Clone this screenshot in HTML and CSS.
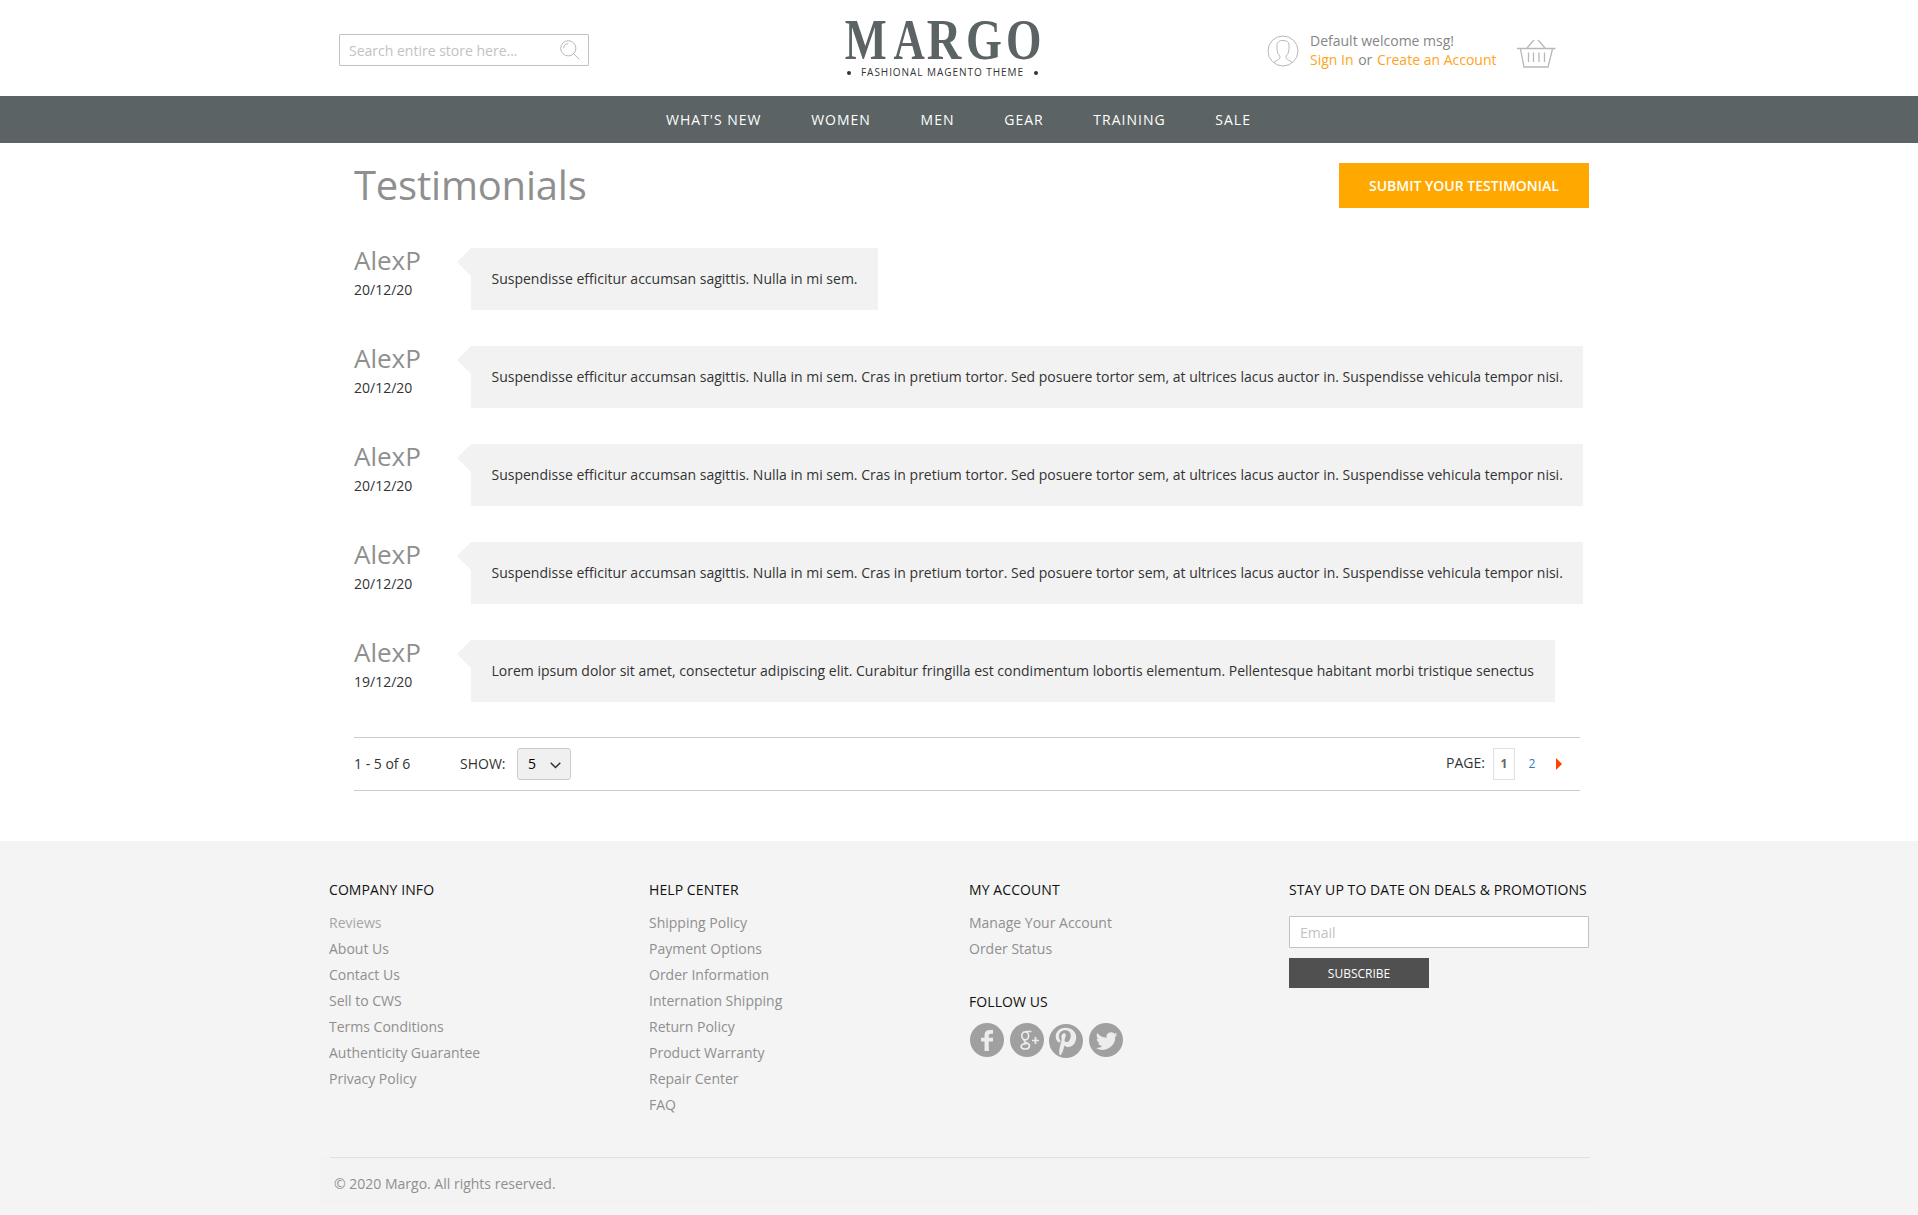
FILE: index.html
```html
<!DOCTYPE html>
<html lang="en">
<head>
<meta charset="utf-8">
<title>Testimonials</title>
<link rel="stylesheet" href="styles.css">
</head>
<body>
<header class="header">
  <form class="search">
    <input class="search-input" type="text" placeholder="Search entire store here...">
    <svg class="search-icon" width="20" height="20" viewBox="0 0 20 20"><circle cx="8.3" cy="8.3" r="7.6"/><path d="M13.7 13.7 19.3 19.3M3.6 8.2a4.7 4.7 0 0 1 4.6-4.6"/></svg>
  </form>
  <a class="logo">
    <svg width="200" height="90" viewBox="0 -16 200 90">
      <g class="logo-word">
        <text transform="translate(3.8 43) scale(.78 1)">M</text>
        <text transform="translate(52.5 43) scale(.76 1)">A</text>
        <text transform="translate(85.8 43) scale(.84 1)">R</text>
        <text transform="translate(125 43) scale(.81 1)">G</text>
        <text transform="translate(165.100 43) scale(.8 1)">O</text>
      </g>
      <circle cx="8" cy="57" r="2"/><circle cx="195" cy="57" r="2"/>
      <text class="logo-tag" x="20" y="60" textLength="162">FASHIONAL MAGENTO THEME</text>
    </svg>
  </a>
  <div class="account">
    <svg class="user-icon" width="32" height="32" viewBox="0 0 32 32"><circle cx="16" cy="16" r="15"/><path d="M6.5 27.5c1.500-1.600 4.700-2 6-3.800 .6-1 .4-2 .4-2.700-2-1.700-2.700-4-2.900-7.500V9.700C10.200 6.700 12.400 5.500 16 5.500s5.800 1.200 6 4.200v3.800c-.2 3.500-.9 5.800-2.900 7.500 0 .7-.2 1.700.4 2.700 1.300 1.800 4.500 2.200 6 3.800"/></svg>
    <div class="welcome"><div>Default welcome msg!</div><div><a>Sign In</a> <span class="or">or</span> <a>Create an Account</a></div></div>
    <svg class="cart-icon" width="40" height="30" viewBox="0 0 40 30"><path d="M1 9.500h38.500M4.500 10 8 28h24l4.500-18M11 9 18 1M22 1l7 8M12.500 13.500v9.500M17.500 13.500v9.500M23 13.500v9.500M28.500 13.500v9.500"/></svg>
  </div>
</header>
<nav class="nav"><a>WHAT'S NEW</a><a>WOMEN</a><a>MEN</a><a>GEAR</a><a>TRAINING</a><a>SALE</a></nav>
<main class="main">
  <div class="title-row"><h1 class="title">Testimonials</h1><button class="submit">SUBMIT YOUR TESTIMONIAL</button></div>
  <div class="list">
    <article class="item"><div class="who"><h2>AlexP</h2><time>20/12/20</time></div><p class="bubble">Suspendisse efficitur accumsan sagittis. Nulla in mi sem.</p></article>
    <article class="item"><div class="who"><h2>AlexP</h2><time>20/12/20</time></div><p class="bubble">Suspendisse efficitur accumsan sagittis. Nulla in mi sem. Cras in pretium tortor. Sed posuere tortor sem, at ultrices lacus auctor in. Suspendisse vehicula tempor nisi.</p></article>
    <article class="item"><div class="who"><h2>AlexP</h2><time>20/12/20</time></div><p class="bubble">Suspendisse efficitur accumsan sagittis. Nulla in mi sem. Cras in pretium tortor. Sed posuere tortor sem, at ultrices lacus auctor in. Suspendisse vehicula tempor nisi.</p></article>
    <article class="item"><div class="who"><h2>AlexP</h2><time>20/12/20</time></div><p class="bubble">Suspendisse efficitur accumsan sagittis. Nulla in mi sem. Cras in pretium tortor. Sed posuere tortor sem, at ultrices lacus auctor in. Suspendisse vehicula tempor nisi.</p></article>
    <article class="item"><div class="who"><h2>AlexP</h2><time>19/12/20</time></div><p class="bubble">Lorem ipsum dolor sit amet, consectetur adipiscing elit. Curabitur fringilla est condimentum lobortis elementum. Pellentesque habitant morbi tristique senectus</p></article>
  </div>
  <div class="pager">
    <span class="amount">1 - 5 of 6</span>
    <span class="show">SHOW:</span>
    <span class="select">5<svg width="11" height="7" viewBox="0 0 11 7"><path d="M.7.7 5.500 5.500 10.300.7"/></svg></span>
    <span class="page-label">PAGE:</span>
    <span class="page current">1</span>
    <a class="page">2</a>
    <svg class="next" width="6" height="12" viewBox="0 0 6 12"><path d="M0 0 6 6 0 12z"/></svg>
  </div>
</main>
<footer class="footer">
  <div class="columns">
    <section class="col"><h3>COMPANY INFO</h3><ul><li class="hover">Reviews</li><li>About Us</li><li>Contact Us</li><li>Sell to CWS</li><li>Terms Conditions</li><li>Authenticity Guarantee</li><li>Privacy Policy</li></ul></section>
    <section class="col"><h3>HELP CENTER</h3><ul><li>Shipping Policy</li><li>Payment Options</li><li>Order Information</li><li>Internation Shipping</li><li>Return Policy</li><li>Product Warranty</li><li>Repair Center</li><li>FAQ</li></ul></section>
    <section class="col"><h3>MY ACCOUNT</h3><ul><li>Manage Your Account</li><li>Order Status</li></ul>
      <h3 class="follow">FOLLOW US</h3>
      <div class="social">
        <svg width="34" height="34" viewBox="0 0 34 34"><circle cx="17" cy="17" r="17"/><path d="M14.500 28V18.500H11V14.800h3.500v-2.600C14.500 8.700 16.500 7 19.600 7H23v3.700h-2c-1.700 0-2.200.7-2.200 2v2.100H23v3.700h-4.200V28z"/></svg>
        <svg width="34" height="34" viewBox="0 0 34 34"><circle cx="17" cy="17" r="17"/><g class="line"><ellipse cx="15.200" cy="12.800" rx="3.400" ry="4"/><path d="M16 8.500h5.500M14.500 17c-1 1.700 1 2.200 3 3.200 3 1.500 2.600 5.800-2.300 5.800-5.600 0-5.700-5.200 1.300-5.400M25.500 14v7M22 17.500h7"/></g></svg>
        <svg class="low" width="34" height="34" viewBox="0 0 34 34"><circle cx="17" cy="17" r="17"/><path d="M17.300 4C11.200 4 7.500 8.200 7.500 12.600c0 2.600 1.400 5.200 3.500 6.200.5.200.6 0 .7-.3l.4-1.500c.1-.4 0-.5-.2-.8-.7-.9-1.200-2-1.200-3.600 0-3.500 2.400-6.100 6.300-6.100 3.500 0 5.500 2.200 5.500 5.100 0 3.900-1.800 6.700-4.100 6.700-1.300 0-2.300-1-2-2.400.4-1.600 1.200-3.300 1.200-4.500 0-3-4.400-2.600-4.400 1.700 0 1.200.4 2.100.4 2.100l-2.300 9.500c-.5 2-.2 5 0 6.300l1.200.4c.9-1.300 2.100-3.500 2.600-5.400l1.200-4.600c.6 1.100 2.200 1.900 3.700 1.900 4.700 0 8-4.400 8-9.800C28.100 8.200 23.600 4 17.300 4z" transform="translate(-.8 -.2)"/></svg>
        <svg width="34" height="34" viewBox="0 0 34 34"><circle cx="17" cy="17" r="17"/><path d="M28.500 11.200c-.8.400-1.600.6-2.500.7.900-.6 1.500-1.400 1.900-2.400-.8.500-1.800.9-2.700 1.100a4.500 4.500 0 0 0-7.600 4.100c-3.700-.2-7-2-9.300-4.800-1.200 2.100-.6 4.700 1.400 6-.7 0-1.400-.2-2-.5 0 2.100 1.400 4.100 3.500 4.500-.6.200-1.400.2-2 .1.600 1.800 2.200 3.100 4.200 3.100a9 9 0 0 1-6.400 1.900 12.800 12.800 0 0 0 19.300-11.500c.9-.6 1.600-1.400 2.200-2.300z"/></svg>
      </div>
    </section>
    <section class="col last"><h3>STAY UP TO DATE ON DEALS &amp; PROMOTIONS</h3><input class="email" type="text" placeholder="Email"><button class="subscribe">SUBSCRIBE</button></section>
  </div>
  <div class="legal"><div class="rule"></div><p>© 2020 Margo. All rights reserved.</p></div>
</footer>
</body>
</html>
```
FILE: styles.css
```css
* { box-sizing: border-box; }
body { margin: 0; background: #fff; color: #333; font: 14px/20px "Open Sans", sans-serif; }
h1, h2, h3, p, ul { margin: 0; padding: 0; font-weight: 400; list-style: none; }
input, button { font-family: inherit; border: 0; margin: 0; }
input::placeholder { color: #c2c2c2; opacity: 1; }

.header { width: 1280px; height: 96px; margin: 0 auto; padding: 0 20px; display: grid; grid-template-columns: 502px 200px 1fr; align-items: start; }
.search { display: flex; align-items: center; width: 250px; height: 32px; margin-top: 34px; padding: 0 8px 0 9px; border: 1px solid #c2c2c2; border-radius: 1px; }
.search-input { flex: 1; min-width: 0; padding: 0; font-size: 14px; outline: 0; background: none; }
.search-icon, .user-icon, .cart-icon { fill: none; stroke: #b8b8b8; }
.logo svg { display: block; fill: #333; overflow: visible; }
.logo-word { font: bold 57px/1 "Liberation Serif", serif; fill: #5b6364; }
.logo-tag { font-size: 10px; font-weight: 400; fill: #333; }
.account { display: flex; padding-left: 225px; }
.user-icon { margin: 35px 0 0 .5px; flex: none; }
.welcome { width: 206px; margin: 31px 0 0 11.500px; line-height: 19px; color: #858585; white-space: nowrap; }
.welcome a { color: #ffa31a; }
.or { margin: 0 1px; }
.cart-icon { margin-top: 39px; flex: none; stroke-width: 1.3; }

.nav { height: 47px; padding-right: 1px; background: #5b6364; display: flex; justify-content: center; gap: 49.7px; line-height: 47px; color: #fff; letter-spacing: 1px; font-weight: 500; }

.main { width: 1235px; margin: 0 auto 0 354px; height: 698px; }
.title-row { display: flex; justify-content: space-between; padding-top: 20px; height: 105px; }
.title { font-size: 40px; line-height: 43px; letter-spacing: -.2px; color: #8f8f8f; }
.submit { width: 250px; height: 45px; background: #ffa800; color: #fff; font-size: 14px; font-weight: 600; }
.item { display: flex; height: 98px; }
.who { width: 117px; color: #333; }
.who h2 { font-size: 26px; line-height: 24px; color: #8f8f8f; }
.who time { display: block; line-height: 20px; margin-top: 8px; }
.bubble { position: relative; height: 62px; padding: 21px 20.500px; background: #f2f2f2; white-space: nowrap; }
.bubble::before { content: ""; position: absolute; left: -14px; top: 0; width: 14px; height: 28px; background: #f2f2f2; clip-path: polygon(100% 0, 0 50%, 100% 100%); }
.pager { display: flex; align-items: center; width: 1226px; height: 54px; margin-top: -1px; border: solid #ccc; border-width: 1px 0; }
.amount { width: 106px; }
.show { width: 57px; }
.select { display: flex; align-items: center; justify-content: space-between; width: 54px; height: 32px; padding: 0 9px 0 10px; border: 1px solid #ccc; border-radius: 3px; background: #f0f0f0; color: #000; }
.select svg { fill: none; stroke: #333; stroke-width: 1.5; margin-top: 2px; }
.page-label { margin: 0 8px 2px auto; }
.page { width: 22px; height: 32px; line-height: 31px; font-size: 12px; text-align: center; color: #337ab7; }
.current { border: 1px solid #e1e1e1; line-height: 30px; font-weight: 700; color: #666; margin-right: 6px; }
.next { fill: #ff4200; margin: 0 18px 0 13px; }

.footer { height: 374px; background: #f4f4f4; color: #8f8f8f; }
.columns { display: grid; grid-template-columns: repeat(3, 320px) 300px; width: 1260px; height: 316px; margin: 0 auto; padding-top: 39px; }
.col h3 { font-size: 14px; font-weight: 500; letter-spacing: .08px; color: #111; line-height: 20px; white-space: nowrap; }
.col ul { margin-top: 10px; }
.col li { line-height: 26px; }
.hover { color: #a6a6a6; }
.col .follow { margin-top: 30px; }
.social { display: flex; gap: 6px; margin: 11px 0 0 1px; }
.social svg { fill: #ececec; }
.social circle { fill: #a0a0a0; }
.social .line { fill: none; stroke: #ececec; stroke-width: 1.7; }
.social .low { margin: 1px 0 0 -1px; }
.last { display: flex; flex-direction: column; align-items: flex-start; }
.email { width: 300px; height: 32px; margin-top: 16px; padding: 0 10px; font-size: 14px; background: #fff; border: 1px solid #c2c2c2; border-radius: 1px; }
.subscribe { width: 140px; height: 30px; margin-top: 10px; background: #505050; color: #fff; font-size: 12px; }
.legal { width: 1280px; height: 48px; margin: 0 auto; background: #f3f3f3; }
.rule { height: 1px; margin: 0 9px 0 11px; background: #e1e1e1; }
.legal p { padding: 16px 0 0 15px; }
```
